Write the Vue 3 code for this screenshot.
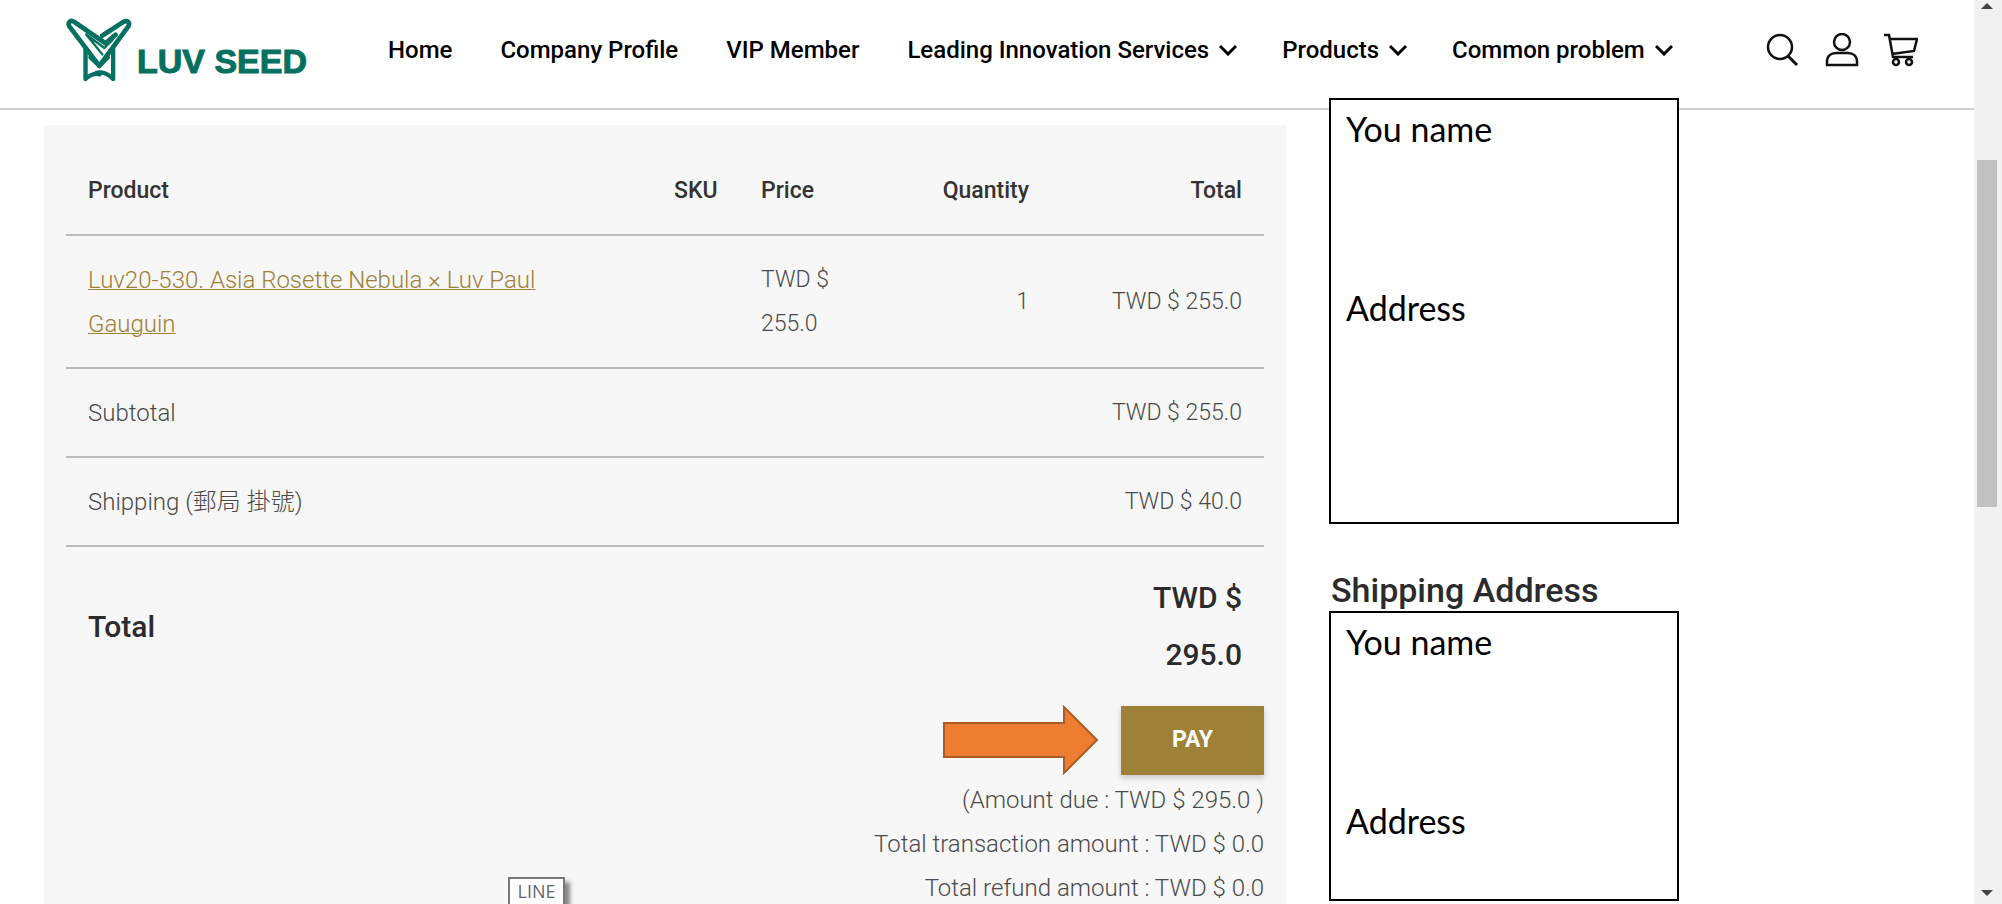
<script setup>
const nav = [
  { label: 'Home' },
  { label: 'Company Profile' },
  { label: 'VIP Member' },
  { label: 'Leading Innovation Services', menu: true },
  { label: 'Products', menu: true },
  { label: 'Common problem', menu: true },
]
</script>

<template>
  <div class="page">
    <div class="content">
      <header class="header">
        <a class="logo" href="#" aria-label="LUV SEED">
          <svg class="mark" viewBox="32 41 196 190" fill="none" stroke="#04705f" stroke-width="14" stroke-linejoin="round" stroke-linecap="round" aria-hidden="true">
            <path d="M140 93 202 53C214 46 223 54 217 66L131 183 42 66C36 54 46 45 57 53L149 116 179 91" />
            <path d="M90 131V222C106 207 118 205 132 208M172 128V222C156 206 140 199 122 204" stroke-width="13" />
            <path d="M92 90 146 130 170 106M92 90 140 149" stroke-width="7" />
            <path d="M104 158 131 184 157 158" stroke-width="12" />
          </svg>
          <span>LUV SEED</span>
        </a>
        <nav class="nav">
          <a v-for="item in nav" :key="item.label" href="#">
            {{ item.label }}
            <svg v-if="item.menu" class="chevron" viewBox="0 0 18 12" aria-hidden="true"><path d="M1 2 9 10 17 2" /></svg>
          </a>
        </nav>
        <div class="tools">
          <button type="button" aria-label="Search">
            <svg viewBox="0 0 34 34"><circle cx="14" cy="14" r="12" /><path d="m22 23 9 9" stroke-width="3" /></svg>
          </button>
          <button type="button" aria-label="Account">
            <svg viewBox="0 0 34 34"><circle cx="17" cy="9" r="8" /><path d="M2 32v-3c0-6 4-9 9-9h12c5 0 9 3 9 9v3Z" /></svg>
          </button>
          <button type="button" aria-label="Cart">
            <svg viewBox="0 0 34 34"><path d="M0 2h5l4 22h20M6 6h27l-3 12-22 3" /><circle cx="12" cy="29" r="3" /><circle cx="25" cy="29" r="3" /></svg>
          </button>
        </div>
      </header>

      <main class="main">
        <section class="card">
          <table>
            <colgroup><col class="c-product" /><col class="c-sku" /><col class="c-price" /><col class="c-qty" /><col /></colgroup>
            <thead>
              <tr><th>Product</th><th class="right">SKU</th><th>Price</th><th class="right">Quantity</th><th class="right">Total</th></tr>
            </thead>
            <tbody>
              <tr>
                <td><a href="#">Luv20-530. Asia Rosette Nebula × Luv Paul<br />Gauguin</a></td>
                <td></td>
                <td class="amount">TWD $<br />255.0</td>
                <td class="right amount">1</td>
                <td class="right amount">TWD $ 255.0</td>
              </tr>
              <tr><td colspan="4">Subtotal</td><td class="right amount">TWD $ 255.0</td></tr>
              <tr><td colspan="4">Shipping (郵局 掛號)</td><td class="right amount">TWD $ 40.0</td></tr>
            </tbody>
            <tfoot>
              <tr><td colspan="4">Total</td><td class="right">TWD $<br />295.0</td></tr>
            </tfoot>
          </table>
          <div class="pay-row">
            <svg class="arrow" viewBox="0 0 156 70" aria-hidden="true"><path d="M1 18H121V2L154 35 121 68V52H1Z" /></svg>
            <button type="button" class="pay">PAY</button>
          </div>
          <div class="summary">
            <div>(Amount due : TWD $ 295.0 )</div>
            <div>Total transaction amount : TWD $ 0.0</div>
            <div>Total refund amount : TWD $ 0.0</div>
          </div>
          <div class="tip" role="tooltip">LINE</div>
        </section>

        <aside class="side">
          <div class="box billing"><p>You name</p><p>Address</p></div>
          <h2>Shipping Address</h2>
          <div class="box"><p>You name</p><p>Address</p></div>
        </aside>
      </main>
    </div>

    <div class="scrollbar" aria-hidden="true">
      <svg viewBox="0 0 12 6"><path d="M0 6 6 0 12 6Z" /></svg>
      <div class="track"><div class="thumb"></div></div>
      <svg viewBox="0 0 12 6"><path d="M0 0 6 6 12 0Z" /></svg>
    </div>
  </div>
</template>

<style>
body { margin: 0; background: #fff; }
</style>

<style scoped>
* { box-sizing: border-box; }
.page {
  display: flex;
  height: 100vh;
  overflow: hidden;
  font-family: Roboto, "Noto Sans CJK TC", sans-serif;
  font-size: 24px;
  font-weight: 300;
  line-height: 44px;
  color: #4a4a4a;
}
.content { flex: 1; min-width: 0; overflow: hidden; }
.header {
  display: flex;
  align-items: center;
  height: 110px;
  padding: 0 56px 8px 66px;
  border-bottom: 2px solid #ccc;
}
.logo {
  display: flex;
  align-items: flex-end;
  gap: 5px;
  width: 322px;
  color: #04705f;
  font: bold 34px/42px "Liberation Sans", Arial, sans-serif;
  -webkit-text-stroke: 1px #04705f;
  text-decoration: none;
  white-space: nowrap;
}
.mark { width: 66px; height: 64px; }
.nav { display: flex; flex: 1; gap: 48px; }
.nav a {
  display: flex;
  align-items: center;
  gap: 10px;
  color: #000;
  font-weight: 500;
  text-decoration: none;
  white-space: nowrap;
}
.chevron { width: 18px; height: 12px; margin-right: -3px; fill: none; stroke: #000; stroke-width: 3; }
.tools { display: flex; gap: 25px; }
.tools button { padding: 0; border: 0; background: none; line-height: 0; }
.tools svg { width: 34px; height: 34px; fill: none; stroke: #111; stroke-width: 2.5; }
.main {
  display: grid;
  grid-template-columns: 1242fr 350fr;
  column-gap: 43px;
  align-items: start;
  padding: 15px 295px 0 44px;
}
.card { position: relative; min-width: 0; padding: 22px; background: #f7f7f7; }
table { width: 100%; table-layout: fixed; border-collapse: collapse; }
.c-product { width: 586px; }
.c-sku { width: 87px; }
.c-price { width: 176px; }
.c-qty { width: 136px; }
th, td { padding: 22px 22px 21px; border-bottom: 2px solid #bbb; text-align: left; white-space: nowrap; }
th { color: #333; font-size: 23px; font-weight: 500; }
td a { color: #9e8036; text-decoration: underline; text-decoration-thickness: 1px; }
.amount { font-size: 23px; }
.right { text-align: right; }
tfoot td { border: 0; color: #2b2b2b; font-size: 30px; font-weight: 500; line-height: 57px; }
.pay-row { display: flex; justify-content: flex-end; align-items: center; gap: 22px; margin-top: 1px; }
.arrow { width: 156px; height: 70px; fill: #ed7d31; stroke: #ae5a21; stroke-width: 2; }
.pay {
  width: 143px;
  height: 69px;
  border: 0;
  background: #9e8036;
  box-shadow: 0 3px 6px rgba(0, 0, 0, 0.2);
  color: #fff;
  font: bold 23px/30px Roboto, sans-serif;
}
.summary { padding-top: 3px; text-align: right; }
.tip {
  position: absolute;
  left: 464px;
  top: 752px;
  width: 57px;
  border: 2px solid #777;
  background: #fff;
  box-shadow: 5px 5px 4px rgba(0, 0, 0, 0.45);
  color: #666;
  font: 18px/25px "Open Sans", sans-serif;
  text-align: center;
}
.side { margin-top: -27px; }
.box {
  height: 290px;
  padding: 6px 15px;
  border: 2px solid #000;
  background: #fff;
  color: #000;
  font: 34px/45px Lato, sans-serif;
}
.billing { position: relative; height: 426px; }
.box p { margin: 0 0 134px; }
.side h2 { margin: 45px 0 0; padding-left: 2px; color: #2b2b2b; font-size: 34px; font-weight: 500; line-height: 42px; white-space: nowrap; }
.scrollbar { display: flex; flex-direction: column; align-items: center; width: 28px; padding: 3px 2px 8px 0; background: #f1f1f1; }
.scrollbar svg { width: 12px; height: 6px; fill: #444; }
.track { flex: 1; padding-top: 151px; }
.thumb { width: 20px; height: 41%; min-height: 347px; background: #c1c1c1; }
</style>
